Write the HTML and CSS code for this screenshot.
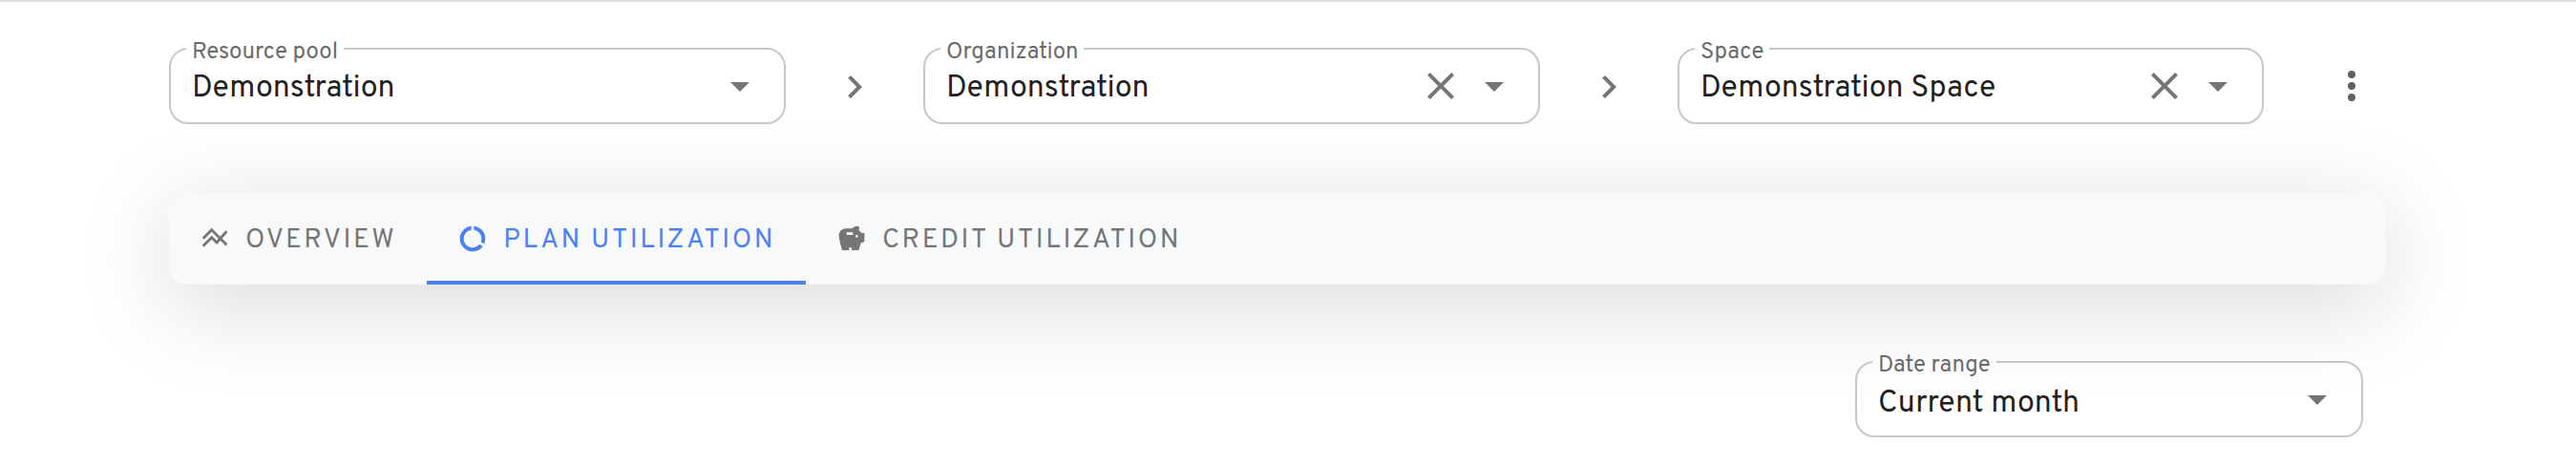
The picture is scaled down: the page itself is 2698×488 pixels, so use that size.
FILE: index.html
```html
<!DOCTYPE html>
<html lang="en">
<head>
<meta charset="utf-8">
<title>Plan utilization</title>
<link rel="stylesheet" href="styles.css">
</head>
<body>
<main class="page">
  <div class="filters">
    <fieldset class="field field--wide">
      <legend class="field__label">Resource pool</legend>
      <div class="field__body">
        <span class="field__value">Demonstration</span>
        <svg class="icon" viewBox="0 0 24 24"><path d="M7 10l5 5 5-5z"/></svg>
      </div>
    </fieldset>
    <svg class="icon separator" viewBox="0 0 24 24"><path d="M10 6 8.59 7.41 13.17 12l-4.58 4.59L10 18l6-6z"/></svg>
    <fieldset class="field field--wide">
      <legend class="field__label">Organization</legend>
      <div class="field__body">
        <span class="field__value">Demonstration</span>
        <svg class="icon" viewBox="0 0 24 24"><path d="M19 6.41 17.59 5 12 10.59 6.41 5 5 6.41 10.59 12 5 17.59 6.41 19 12 13.41 17.59 19 19 17.59 13.41 12z"/></svg>
        <svg class="icon" viewBox="0 0 24 24"><path d="M7 10l5 5 5-5z"/></svg>
      </div>
    </fieldset>
    <svg class="icon separator" viewBox="0 0 24 24"><path d="M10 6 8.59 7.41 13.17 12l-4.58 4.59L10 18l6-6z"/></svg>
    <fieldset class="field field--space">
      <legend class="field__label">Space</legend>
      <div class="field__body">
        <span class="field__value">Demonstration Space</span>
        <svg class="icon" viewBox="0 0 24 24"><path d="M19 6.41 17.59 5 12 10.59 6.41 5 5 6.41 10.59 12 5 17.59 6.41 19 12 13.41 17.59 19 19 17.59 13.41 12z"/></svg>
        <svg class="icon" viewBox="0 0 24 24"><path d="M7 10l5 5 5-5z"/></svg>
      </div>
    </fieldset>
    <svg class="icon more" viewBox="0 0 24 24"><circle cx="12" cy="6" r="2"/><circle cx="12" cy="12" r="2"/><circle cx="12" cy="18" r="2"/></svg>
  </div>

  <nav class="tabs">
    <a class="tab">
      <svg class="tab__icon" viewBox="0 0 24 24"><path class="line" d="M2.75 11.75 9.5 5 21.3 16.8M2.75 17.74 9.5 10.98l4 4 7.8-8.77"/></svg>
      <span class="tab__text">OVERVIEW</span>
    </a>
    <a class="tab tab--active">
      <svg class="tab__icon" viewBox="0 0 24 24"><path d="M13 2.05v3.03c3.39.49 6 3.39 6 6.92 0 .9-.18 1.75-.48 2.54l2.6 1.53c.56-1.24.88-2.62.88-4.07 0-5.18-3.95-9.45-9-9.95zM12 19c-3.87 0-7-3.13-7-7 0-3.53 2.61-6.43 6-6.92V2.05c-5.06.5-9 4.76-9 9.95 0 5.52 4.47 10 9.99 10 3.31 0 6.24-1.61 8.06-4.09l-2.6-1.53C16.17 17.98 14.21 19 12 19z"/></svg>
      <span class="tab__text">PLAN UTILIZATION</span>
    </a>
    <a class="tab">
      <svg class="tab__icon" viewBox="0 0 24 24"><path d="m19.83 7.5-2.27-2.27c.07-.42.18-.81.32-1.15.08-.18.12-.37.12-.58 0-.83-.67-1.5-1.5-1.5-1.64 0-3.09.79-4 2h-5C4.46 4 2 6.46 2 9.5S4.5 21 4.5 21H10v-2h2v2h5.5l1.68-5.59 2.82-.94V7.5h-2.17zM13 9H8V7h5v2zm3 2c-.55 0-1-.45-1-1s.45-1 1-1 1 .45 1 1-.45 1-1 1z"/></svg>
      <span class="tab__text">CREDIT UTILIZATION</span>
    </a>
  </nav>

  <div class="range">
    <fieldset class="field field--date">
      <legend class="field__label">Date range</legend>
      <div class="field__body">
        <span class="field__value">Current month</span>
        <svg class="icon" viewBox="0 0 24 24"><path d="M7 10l5 5 5-5z"/></svg>
      </div>
    </fieldset>
  </div>
</main>
</body>
</html>
```

FILE: styles.css
```css
* {
  box-sizing: border-box;
}

body {
  margin: 0;
  background: #fff;
  font-family: Overpass, Roboto, sans-serif;
  color: #212121;
}

.page {
  height: 488px;
  overflow: hidden;
  border-top: 2px solid #e0e0e0;
  padding: 48px 199px 0 177px;
}

.filters {
  display: flex;
  align-items: flex-start;
  position: relative;
  z-index: 1;
}

.icon {
  display: block;
  flex: none;
  width: 48px;
  height: 48px;
  fill: #757575;
}

.separator {
  margin: 17px 48px 0;
}

.more {
  margin: 16px 0 0 68px;
  fill: #616161;
}

/* Outlined select with the label set into its top border */
.field {
  flex: none;
  min-width: 0;
  height: 80px;
  margin: 0;
  padding: 0 22px 0 16px;
  border: 2px solid #c8c8c8;
  border-radius: 20px;
}

.field--wide {
  width: 646px;
}

.field--space {
  width: 614px;
}

.field--date {
  width: 532px;
}

.field__label {
  height: 2px;
  padding: 0 6px;
  font-size: 24px;
  line-height: 10px;
  white-space: nowrap;
  color: #6b6b6b;
}

.field__body {
  display: flex;
  align-items: center;
  gap: 8px;
  height: 76px;
  padding-left: 6px;
}

.field__value {
  flex: 1;
  padding-top: 6px;
  font-size: 32px;
  line-height: 40px;
  letter-spacing: 0.1px;
  white-space: nowrap;
}

.field--date .field__value {
  padding-top: 10px;
}

.tabs {
  display: flex;
  height: 96px;
  margin-top: 72px;
  border-radius: 20px;
  background: #f8f9fb;
  box-shadow: 0 20px 100px rgba(0, 0, 0, 0.16);
}

.tab {
  display: flex;
  align-items: center;
  gap: 16px;
  padding: 4px 32px 0;
  border-bottom: 4px solid transparent;
  font-size: 28px;
  line-height: 36px;
  letter-spacing: 2.62px;
  white-space: nowrap;
  color: #757575;
}

.tab--active {
  border-color: #4a80f8;
  color: #4a80f8;
}

.tab__text {
  padding-top: 4px;
}

.tab__icon {
  flex: none;
  width: 32px;
  height: 32px;
  fill: currentColor;
}

.line {
  fill: none;
  stroke: currentColor;
  stroke-width: 2.1;
}

.range {
  display: flex;
  justify-content: flex-end;
  position: relative;
  padding: 80px 24px 0 0;
}
```
